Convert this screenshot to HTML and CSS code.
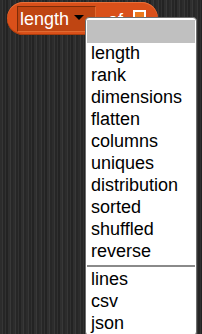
FILE: index.html
```html
<!DOCTYPE html>
<html>
<head>
<meta charset="utf-8">
<link rel="stylesheet" href="styles.css">
</head>
<body>
<div class="canvas">
  <div class="block">
    <div class="slot">
      <span class="slot-text">length</span>
      <span class="arrow"></span>
    </div>
    <span class="label">of</span>
    <span class="list-slot"></span>
  </div>
  <div class="menu">
    <div class="item item-blank"></div>
    <div class="item">length</div>
    <div class="item">rank</div>
    <div class="item">dimensions</div>
    <div class="item">flatten</div>
    <div class="item">columns</div>
    <div class="item">uniques</div>
    <div class="item">distribution</div>
    <div class="item">sorted</div>
    <div class="item">shuffled</div>
    <div class="item">reverse</div>
    <div class="sep"></div>
    <div class="item">lines</div>
    <div class="item">csv</div>
    <div class="item">json</div>
  </div>
</div>
</body>
</html>
```
FILE: styles.css
```css
html, body {
  margin: 0;
  padding: 0;
}
body {
  width: 202px;
  height: 334px;
  overflow: hidden;
  font-family: "Liberation Sans", Arial, sans-serif;
  background-color: #2b2b2b;
  background-image: repeating-linear-gradient(90deg,
    #2c2c2c 0px, #2c2c2c 2px,
    #363636 2px, #363636 3px,
    #262626 3px, #262626 5px,
    #313131 5px, #313131 6px,
    #232323 6px, #232323 8px,
    #2f2f2f 8px, #2f2f2f 10px,
    #383838 10px, #383838 11px,
    #272727 11px, #272727 13px);
}
.canvas {
  position: relative;
  width: 202px;
  height: 334px;
}
.block {
  display: flex;
  align-items: center;
  box-sizing: border-box;
  width: 151px;
  height: 33px;
  margin: 2px 0 0 7px;
  padding-left: 10px;
  border-radius: 17px;
  background: #d9501a;
  box-shadow: inset 0 1px 0 #e8703a, inset 0 -1px 0 #a83c0c;
}
.slot {
  display: flex;
  align-items: center;
  box-sizing: border-box;
  width: 79px;
  height: 26px;
  padding-left: 2px;
  background: #bf4512;
  border: 1px solid #7d2c08;
  border-right-color: #e06a30;
  border-bottom-color: #e06a30;
}
.slot-text {
  color: #ffffff;
  font-size: 18px;
  line-height: 20px;
}
.arrow {
  width: 0;
  height: 0;
  margin-left: 5px;
  margin-top: -2px;
  border-left: 5px solid transparent;
  border-right: 5px solid transparent;
  border-top: 5px solid #000000;
}
.label {
  margin-left: 12px;
  color: #ffffff;
  font-size: 18px;
  line-height: 20px;
  margin-top: 2px;
}
.list-slot {
  box-sizing: border-box;
  width: 13px;
  height: 13px;
  margin-left: 10px;
  margin-top: -4px;
  border: 2px solid #ffffff;
  background: #ec7a1e;
}
.menu {
  position: absolute;
  left: 85px;
  top: 15px;
  box-sizing: border-box;
  width: 112px;
  padding: 2px 1px 0 1px;
  background: #ffffff;
  border: 1px solid #6e6e6e;
  border-radius: 4px;
}
.item {
  box-sizing: border-box;
  height: 22px;
  padding-left: 4px;
  font-size: 18px;
  line-height: 20px;
  color: #000000;
  white-space: nowrap;
}
.item-blank {
  height: 23px;
  background: #c0c0c0;
}
.sep {
  height: 6px;
  display: flex;
  align-items: center;
}
.sep::before {
  content: "";
  display: block;
  width: 100%;
  height: 2px;
  background: #8a8a8a;
}
```
